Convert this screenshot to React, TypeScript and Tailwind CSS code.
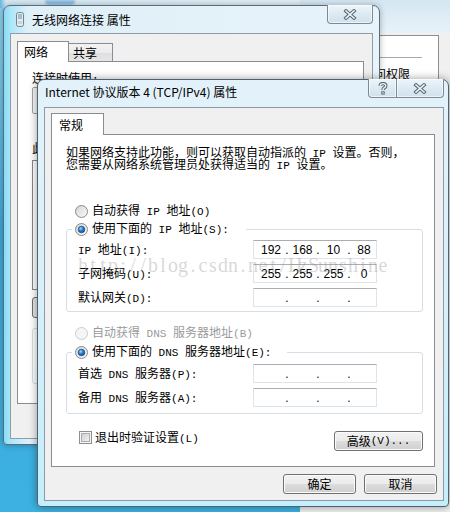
import React from "react";

function T({ s }: { s: string }) {
  const parts = s.split(/([\x20-\x7e]+)/).filter((p) => p.length > 0);
  return (
    <>
      {parts.map((p, i) =>
        /^[\x20-\x7e]+$/.test(p) ? (
          <span key={i} className="whitespace-pre font-['Liberation_Mono',monospace] text-[11px]">
            {p}
          </span>
        ) : (
          <span key={i}>{p}</span>
        )
      )}
    </>
  );
}

function Radio({ checked, disabled }: { checked?: boolean; disabled?: boolean }) {
  return (
    <svg width="13" height="13" viewBox="0 0 13 13" className="shrink-0">
      <defs>
        <linearGradient id="rg" x1="0" y1="0" x2="1" y2="1">
          <stop offset="0" stopColor="#d4d4d4" />
          <stop offset="1" stopColor="#fbfbfb" />
        </linearGradient>
        <radialGradient id="rb" cx="0.38" cy="0.35" r="0.75">
          <stop offset="0" stopColor="#9adcff" />
          <stop offset="0.45" stopColor="#2a80d2" />
          <stop offset="1" stopColor="#143f78" />
        </radialGradient>
      </defs>
      <circle
        cx="6.5"
        cy="6.5"
        r="6"
        fill={disabled ? "#f5f5f5" : "url(#rg)"}
        stroke={disabled ? "#cbcbcb" : "#8a8a8a"}
      />
      {checked && <circle cx="6.5" cy="6.5" r="3.3" fill="url(#rb)" stroke="#1b4a82" strokeWidth="0.7" />}
    </svg>
  );
}

function Check() {
  return (
    <svg width="13" height="13" viewBox="0 0 13 13" className="shrink-0">
      <defs>
        <linearGradient id="cg" x1="0" y1="0" x2="1" y2="1">
          <stop offset="0" stopColor="#cfcfcf" />
          <stop offset="1" stopColor="#f3f3f3" />
        </linearGradient>
      </defs>
      <rect x="0.5" y="0.5" width="12" height="12" fill="#f6f6f6" stroke="#8e8f8f" />
      <rect x="2.5" y="2.5" width="8" height="8" fill="url(#cg)" stroke="#aeaeae" />
    </svg>
  );
}

function IpBox({ v }: { v?: string[] }) {
  const vals = v ?? ["", "", "", ""];
  return (
    <div className="flex h-[19px] w-[124px] items-center border border-[#dfe3ea] border-t-[#abadb3] bg-white font-['Liberation_Sans',sans-serif] text-[12px] leading-[14px] text-black">
      <span className="w-[30px] pl-[4px] text-center">{vals[0]}</span>
      <span className="w-[6px] text-center">.</span>
      <span className="w-[25px] text-center">{vals[1]}</span>
      <span className="w-[6px] text-center">.</span>
      <span className="w-[25px] text-center">{vals[2]}</span>
      <span className="w-[6px] text-center">.</span>
      <span className="flex-1 text-center">{vals[3]}</span>
    </div>
  );
}

const btnCls =
  "flex h-[20px] items-center justify-center rounded-[3px] border border-[#707070] bg-[linear-gradient(#f2f2f2_0%,#ebebeb_50%,#dddddd_50%,#cfcfcf_100%)] shadow-[inset_0_0_0_1px_#fbfbfb] text-[12px] leading-[14px]";

function CloseGlyph() {
  return (
    <svg width="14" height="11" viewBox="0 0 14 11">
      <path d="M3 2 L11 9 M11 2 L3 9" stroke="#56656f" strokeWidth="3.6" strokeLinecap="square" fill="none" />
      <path d="M3 2 L11 9 M11 2 L3 9" stroke="#eef3f6" strokeWidth="1.6" strokeLinecap="square" fill="none" />
    </svg>
  );
}

function HelpGlyph() {
  return (
    <svg width="10" height="13" viewBox="0 0 10 13">
      <path
        d="M2.2 3.8 Q2.2 1.6 5 1.6 Q7.8 1.6 7.8 3.8 Q7.8 5.2 6.2 5.9 Q5 6.4 5 8"
        stroke="#56656f"
        strokeWidth="3.4"
        fill="none"
      />
      <path
        d="M2.2 3.8 Q2.2 1.6 5 1.6 Q7.8 1.6 7.8 3.8 Q7.8 5.2 6.2 5.9 Q5 6.4 5 8"
        stroke="#eef3f6"
        strokeWidth="1.4"
        fill="none"
      />
      <rect x="3.3" y="9.3" width="3.4" height="3.2" fill="#56656f" />
      <rect x="4.3" y="10.2" width="1.4" height="1.4" fill="#eef3f6" />
    </svg>
  );
}

function AdapterIcon() {
  return (
    <svg width="8" height="15" viewBox="0 0 8 15">
      <rect x="0.5" y="0.5" width="7" height="14" rx="2" fill="#e3ebf1" stroke="#71838f" />
      <rect x="2" y="2" width="4" height="5" fill="#a9bccb" />
      <rect x="2" y="9" width="4" height="3" fill="#c8d5de" />
    </svg>
  );
}

const tabBorder = "border-[#898c95]";

export default function App() {
  const watermark = "http://blog.csdn.net/HzSunshine";
  return (
    <div className="relative h-[512px] w-[450px] overflow-hidden bg-[linear-gradient(180deg,#8fd0ec_0%,#3aa7db_45%,#3db2e2_100%)] font-['Noto_Sans_CJK_SC',sans-serif] text-black">
      {/* top blurred strip */}
      <div className="absolute left-0 top-0 flex h-[8px] w-[450px] bg-[linear-gradient(90deg,#5fb8e2_0px,#d6e9f4_6px,#e6f1f8_100%)]">
        <div className="ml-[45px] h-[5px] w-[30px] rounded-b-[4px] bg-[#8dbde3] blur-[1px]" />
      </div>

      {/* third window behind, at right */}
      <div className="absolute left-[300px] top-[-10px] flex h-[540px] w-[160px] flex-col bg-[linear-gradient(180deg,#e4f0f8_0%,#d5e8f4_100%)]">
        <div className="h-[43px] shrink-0 bg-[linear-gradient(180deg,#cfe3f1_0%,#e7f2f9_100%)]" />
        <div className="flex flex-1 flex-col bg-[#f0f0f0] pt-[2px]">
          <div className="ml-[30px] flex h-[200px] w-[109px] flex-col border-r border-t border-[#8e8f8f] bg-white">
            <div className="ml-[48px] mt-[21px] h-px w-[44px] bg-[#a8a8a8]" />
            <div className="ml-[32px] mt-[9px] text-[12px] leading-[14px]">访问权限</div>
          </div>
        </div>
      </div>

      {/* background window */}
      <div className="absolute left-[3px] top-[5px] flex h-[440px] w-[377px] flex-col rounded-b-[4px] rounded-t-[7px] border border-[#5b6d7b] bg-[linear-gradient(90deg,#86dbf4_0px,#a9e6f8_6px,#dff0f8_24px,#e8f3fa_100%)] px-[6px] pb-[5px] shadow-[0_0_6px_rgba(0,0,0,0.3)]">
        <div className="flex h-[27px] shrink-0 items-center">
          <div className="ml-[6px]">
            <AdapterIcon />
          </div>
          <div className="ml-[8px] text-[12px] leading-[16px]">无线网络连接 属性</div>
          <div className="-mt-[1px] ml-auto flex h-[19px] w-[46px] items-center justify-center self-start rounded-b-[4px] border border-t-0 border-[#7b8a95] bg-[linear-gradient(180deg,#edf5fa_0%,#dbe9f2_55%,#d0e2ee_100%)] shadow-[inset_0_0_0_1px_rgba(255,255,255,0.6)]">
            <CloseGlyph />
          </div>
        </div>
        <div className="flex flex-1 flex-col border border-[#8d9eaa] bg-[#f0f0f0] pl-[6px] pr-[8px] pt-[7px]">
          <div className="flex h-[20px] items-end">
            <div className={`relative z-10 -mb-px flex h-[21px] w-[52px] items-center border border-b-0 ${tabBorder} bg-white pl-[6px] text-[12px] leading-[14px]`}>
              网络
            </div>
            <div className={`flex h-[18px] w-[44px] items-center border border-b-0 border-l-0 ${tabBorder} bg-[linear-gradient(180deg,#f3f3f3_0%,#ebebeb_50%,#dedede_50%,#e5e5e5_100%)] pl-[4px] text-[12px] leading-[14px]`}>
              共享
            </div>
          </div>
          <div className={`flex h-[343px] flex-col border ${tabBorder} bg-white pl-[14px] pr-[12px]`}>
            <div className="mt-[8px] h-[16px] text-[12px] leading-[16px]">
              <T s="连接时使用:" />
            </div>
            <div className="mt-[1px] h-[27px] rounded-[2px] border border-[#a3a3a3] bg-[#f7f7f7]" />
            <div className="mt-[26px] h-[16px] text-[12px] leading-[16px]">
              <T s="此连接使用下列项目:" />
            </div>
            <div className="mt-[4px] h-[130px] border border-[#828790] bg-white" />
            <div className="mt-[7px] flex h-[21px] w-[80px] rounded-[3px] border border-[#707070] bg-[#e6e6e6]" />
            <div className="mt-[10px] h-[56px] rounded-[3px] border border-[#d5dfe5]" />
          </div>
        </div>
      </div>

      {/* foreground dialog */}
      <div className="absolute left-[37px] top-[79px] flex h-[428px] w-[412px] flex-col rounded-b-[4px] rounded-t-[7px] border border-[#4e6272] bg-[linear-gradient(180deg,#e3f2fa_0%,#dcf0f9_40%,#c4eefb_100%)] pb-[5px] pl-[6px] pr-[4px] shadow-[0_0_9px_rgba(0,0,0,0.4)]">
        <div className="flex h-[27px] shrink-0 items-start">
          <div className="ml-[1px] mt-[4px] text-[12px] leading-[16px]">Internet 协议版本 4 (TCP/IPv4) 属性</div>
          <div className="-mt-[1px] ml-auto flex h-[19px]">
            <div className="flex w-[29px] items-center justify-center rounded-bl-[4px] border border-t-0 border-[#7b8a95] bg-[linear-gradient(180deg,#edf5fa_0%,#dbe9f2_55%,#d0e2ee_100%)] shadow-[inset_0_0_0_1px_rgba(255,255,255,0.6)]">
              <HelpGlyph />
            </div>
            <div className="flex w-[47px] items-center justify-center rounded-br-[4px] border border-l-0 border-t-0 border-[#7b8a95] bg-[linear-gradient(180deg,#edf5fa_0%,#dbe9f2_55%,#d0e2ee_100%)] shadow-[inset_0_0_0_1px_rgba(255,255,255,0.6)]">
              <CloseGlyph />
            </div>
          </div>
        </div>

        <div className="flex flex-1 flex-col border border-[#8d9aa5] bg-[#f0f0f0] pl-[6px] pr-[8px] pt-[5px]">
          <div className="flex h-[21px] items-end">
            <div className={`relative z-10 -mb-px flex h-[22px] w-[53px] items-center border border-b-0 ${tabBorder} bg-white pl-[7px] text-[12px] leading-[14px]`}>
              常规
            </div>
          </div>
          <div className={`flex h-[333px] flex-col border ${tabBorder} bg-white pl-[14px] pr-[11px] text-[12px]`}>
            <div className="mt-[11px] flex flex-col whitespace-nowrap leading-[12px]">
              <div className="h-[12px]">
                <T s="如果网络支持此功能，则可以获取自动指派的 IP 设置。否则，" />
              </div>
              <div className="h-[12px]">
                <T s="您需要从网络系统管理员处获得适当的 IP 设置。" />
              </div>
            </div>

            <div className="ml-[9px] mt-[33px] flex h-[16px] items-center gap-[4px] leading-[14px]">
              <Radio />
              <span>
                <T s="自动获得 IP 地址(O)" />
              </span>
            </div>

            <fieldset className="mt-[2px] rounded-[3px] border border-[#d5dfe5] pb-[4px]">
              <legend className="ml-[5px] w-[174px] pl-[3px]">
                <div className="flex h-[16px] items-center gap-[4px] leading-[14px]">
                  <Radio checked />
                  <span>
                    <T s="使用下面的 IP 地址(S):" />
                  </span>
                </div>
              </legend>
              <div className="mt-[3px] flex flex-col gap-[5px] pl-[11px]">
                <div className="flex h-[19px] items-center">
                  <span className="w-[175px] leading-[14px]">
                    <T s="IP 地址(I):" />
                  </span>
                  <IpBox v={["192", "168", "10", "88"]} />
                </div>
                <div className="flex h-[19px] items-center">
                  <span className="w-[175px] leading-[14px]">
                    <T s="子网掩码(U):" />
                  </span>
                  <IpBox v={["255", "255", "255", "0"]} />
                </div>
                <div className="flex h-[19px] items-center">
                  <span className="w-[175px] leading-[14px]">
                    <T s="默认网关(D):" />
                  </span>
                  <IpBox />
                </div>
              </div>
            </fieldset>

            <div className="ml-[9px] mt-[13px] flex h-[16px] items-center gap-[4px] leading-[14px] text-[#9a9a9a]">
              <Radio disabled />
              <span>
                <T s="自动获得 DNS 服务器地址(B)" />
              </span>
            </div>

            <fieldset className="mt-[3px] rounded-[3px] border border-[#d5dfe5] pb-[6px]">
              <legend className="ml-[5px] w-[215px] pl-[3px]">
                <div className="flex h-[16px] items-center gap-[4px] leading-[14px]">
                  <Radio checked />
                  <span>
                    <T s="使用下面的 DNS 服务器地址(E):" />
                  </span>
                </div>
              </legend>
              <div className="mt-[4px] flex flex-col gap-[5px] pl-[11px]">
                <div className="flex h-[19px] items-center">
                  <span className="w-[175px] leading-[14px]">
                    <T s="首选 DNS 服务器(P):" />
                  </span>
                  <IpBox />
                </div>
                <div className="flex h-[19px] items-center">
                  <span className="w-[175px] leading-[14px]">
                    <T s="备用 DNS 服务器(A):" />
                  </span>
                  <IpBox />
                </div>
              </div>
            </fieldset>

            <div className="mt-[17px] flex h-[20px] items-start">
              <div className="ml-[13px] flex h-[13px] items-center gap-[3px] leading-[14px]">
                <Check />
                <span>
                  <T s="退出时验证设置(L)" />
                </span>
              </div>
              <div className={`ml-auto w-[89px] ${btnCls}`}>
                <T s="高级(V)..." />
              </div>
            </div>
          </div>

          <div className="-mr-[2px] mt-[7px] flex justify-end gap-[8px]">
            <div className={`w-[73px] ${btnCls}`}>确定</div>
            <div className={`w-[73px] ${btnCls}`}>取消</div>
          </div>
        </div>
      </div>

      {/* watermark */}
      <div className="pointer-events-none absolute left-[78px] top-[255px] flex font-['Liberation_Serif',serif] text-[20px] leading-[20px] text-[#9a9a9a]/40">
        {watermark.split("").map((c, i) => (
          <span key={i} className="inline-block w-[10px] text-center">
            {c}
          </span>
        ))}
      </div>
    </div>
  );
}
